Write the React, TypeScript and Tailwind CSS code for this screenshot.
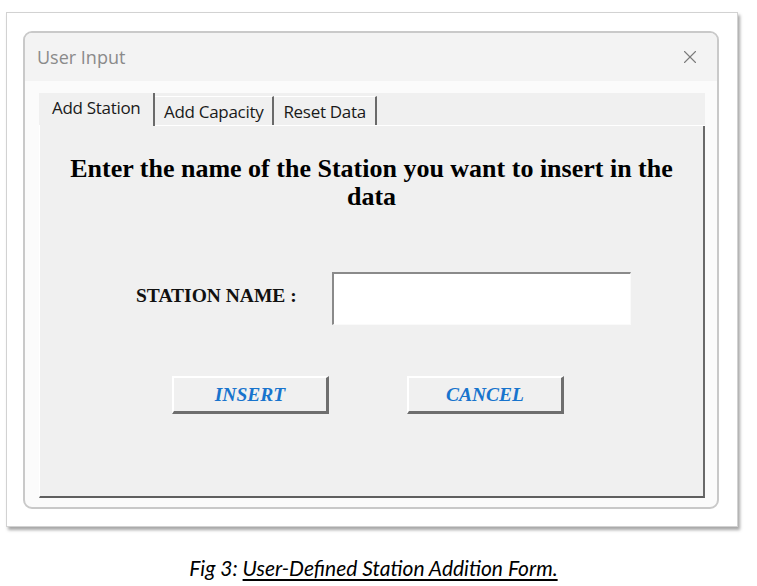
import { X } from "lucide-react";

const tabs = [
  { label: "Add Station", active: true },
  { label: "Add Capacity", active: false },
  { label: "Reset Data", active: false },
];

function RaisedButton({ label }: { label: string }) {
  return (
    <button className="w-[157px] h-[38px] bg-[#f0f0f0] border-t-2 border-l-2 border-t-white border-l-white border-r-[3px] border-b-[3px] border-r-[#6e6e6e] border-b-[#6e6e6e] text-[#1874cd] text-[19.5px] font-bold italic font-['Liberation_Serif',serif]">
      {label}
    </button>
  );
}

export default function App() {
  return (
    <div className="w-[757px] h-[586px] bg-white font-['Noto_Sans',sans-serif] overflow-hidden">
      <div className="ml-[6px] pt-[12px]">
        {/* outer screenshot frame */}
        <div className="w-[732px] h-[515px] bg-white border border-[#d2d2d2] shadow-[2px_3px_3px_rgba(0,0,0,0.35)] pl-[16px] pt-[18px]">
          {/* dialog */}
          <div className="w-[696px] h-[478px] rounded-[9px] border-2 border-[#c9c9c9] bg-[#fbfbfb] flex flex-col overflow-hidden">
            <div className="h-[48px] bg-[#f3f3f3] flex items-center justify-between pl-[12px] pr-[16px]">
              <span className="text-[18px] text-[#8a8a8a] font-['Open_Sans',sans-serif]">User Input</span>
              <X size={22} strokeWidth={1.2} className="text-[#7a7a7a]" />
            </div>
            <div className="flex-1 pt-[12px] pl-[14px] pr-[12px] pb-[9px] flex flex-col">
              {/* tab strip */}
              <div className="h-[33px] bg-[#f0f0f0] flex items-end pl-[1px] border-b border-b-white">
                {tabs.map((t) =>
                  t.active ? (
                    <div
                      key={t.label}
                      className="h-[33px] w-[115px] pl-[12px] pt-[2px] text-[17px] text-[#1a1a1a] border-r-2 border-r-[#6a6a6a] bg-[#f0f0f0] relative top-[1px] font-['Open_Sans',sans-serif] tracking-[-0.3px]"
                    >
                      {t.label}
                    </div>
                  ) : (
                    <div
                      key={t.label}
                      className="h-[29px] px-[9px] pt-[2px] text-[17px] text-[#1a1a1a] border-r-2 border-r-[#6a6a6a] border-t border-t-white font-['Open_Sans',sans-serif] tracking-[-0.3px]"
                    >
                      {t.label}
                    </div>
                  )
                )}
              </div>
              {/* panel */}
              <div className="flex-1 bg-[#f0f0f0] border-l border-l-white border-r-2 border-r-[#6a6a6a] border-b-2 border-b-[#5f5f5f] flex flex-col">
                <h1 className="pt-[29px] text-center text-[26px] leading-[28px] font-bold text-black font-['Liberation_Serif',serif] px-[24px]">
                  Enter the name of the Station you want to insert in the data
                </h1>
                <div className="flex items-center mt-[61px] pl-[96px]">
                  <span className="w-[196px] pb-[6px] text-[19.5px] font-bold text-[#111] font-['Liberation_Serif',serif]">
                    STATION NAME :
                  </span>
                  <div className="w-[299px] h-[53px] bg-white border-t-2 border-l-2 border-t-[#8a8a8a] border-l-[#8a8a8a] border-r border-b border-r-[#fafafa] border-b-[#fafafa]" />
                </div>
                <div className="flex mt-[51px] pl-[132px] gap-[78px]">
                  <RaisedButton label="INSERT" />
                  <RaisedButton label="CANCEL" />
                </div>
              </div>
            </div>
          </div>
        </div>
      </div>
      <p className="mt-[25px] text-center text-[21px] italic text-black font-['Lato',sans-serif] pr-[10px]">
        Fig 3: <span className="underline underline-offset-[3px]">User-Defined Station Addition Form.</span>
      </p>
    </div>
  );
}
